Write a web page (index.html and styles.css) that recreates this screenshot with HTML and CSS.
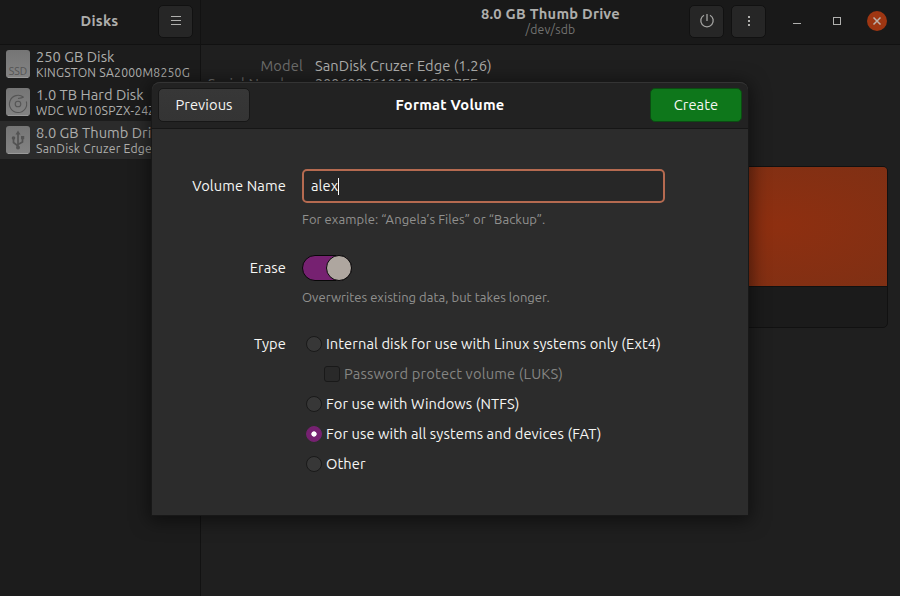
FILE: index.html
```html
<!DOCTYPE html>
<html lang="en">
<head>
<meta charset="utf-8">
<title>Disks</title>
<link rel="stylesheet" href="styles.css">
</head>
<body>
<div class="window">
  <aside class="sidebar">
    <header class="bar side-bar">
      <h1 class="side-title">Disks</h1>
      <button class="icon-btn menu-btn" aria-label="Menu"><svg width="16" height="16" viewBox="0 0 16 16"><path d="M3 3.5h10M3 7.5h10M3 11.5h10" stroke="#b0b0ae"/></svg></button>
    </header>
    <ul class="disks">
      <li class="disk">
        <svg class="disk-icon" width="24" height="28" viewBox="0 0 24 28"><defs><linearGradient id="metal" x2="0" y2="1"><stop stop-color="#757575"/><stop offset="1" stop-color="#838383"/></linearGradient></defs><rect class="plate" width="24" height="28" rx="3"/><path d="M2 27.500h20" stroke="#9a9a9a"/><text x="12" y="24.500" text-anchor="middle" class="ssd" textLength="18.500">SSD</text></svg>
        <div><div class="name">250 GB Disk</div><div class="model">KINGSTON SA2000M8250G</div></div>
      </li>
      <li class="disk">
        <svg class="disk-icon" width="24" height="28" viewBox="0 0 24 28"><rect class="plate" width="24" height="28" rx="3"/><path d="M2 27.500h20" stroke="#9a9a9a"/><g fill="none" stroke="#555" stroke-width="1.100"><path d="M17.500 9.300A8.600 8.600 0 1 0 20.300 13.500"/><circle cx="12" cy="16" r="2.800"/><path d="M12 10.500q4-.500 5.500-1.200"/></g></svg>
        <div><div class="name">1.0 TB Hard Disk</div><div class="model">WDC WD10SPZX-24Z10</div></div>
      </li>
      <li class="disk selected">
        <svg class="disk-icon" width="24" height="28" viewBox="0 0 24 28"><rect class="plate" width="24" height="28" rx="3"/><path d="M2 27.500h20" stroke="#9a9a9a"/><path d="M12 21V8M12 20l-4.500-3.500V12M12 18.500l4.500-2.500V12" fill="none" stroke="#535353" stroke-width="1.700"/><path d="M9.500 8.500 12 4.500l2.500 4z" fill="#535353"/><circle cx="12" cy="21.500" r="2" fill="#535353"/><circle cx="7.500" cy="12" r="1.800" fill="#535353"/><rect x="15" y="10" width="3.200" height="3.200" fill="#535353"/></svg>
        <div><div class="name">8.0 GB Thumb Drive</div><div class="model">SanDisk Cruzer Edge</div></div>
      </li>
    </ul>
  </aside>
  <main class="content">
    <header class="bar main-bar">
      <div class="heading"><div class="drive">8.0 GB Thumb Drive</div><div class="device">/dev/sdb</div></div>
      <button class="icon-btn" aria-label="Power"><svg width="16" height="16" viewBox="0 0 16 16" fill="none" stroke="#a4a4a2" stroke-width="1.300"><path d="M8 1v7M5 2.200a6.200 6.200 0 1 0 6 0"/></svg></button>
      <button class="icon-btn" aria-label="More"><svg width="16" height="16" viewBox="0 0 16 16" fill="#b0b0ae"><path d="M7 3h2v2H7zM7 7h2v2H7zM7 11h2v2H7z"/></svg></button>
      <div class="controls">
        <svg width="20" height="20" viewBox="0 0 20 20"><path d="M6 12.500h8" stroke="#b0b0ae"/></svg>
        <svg width="20" height="20" viewBox="0 0 20 20"><rect x="6.500" y="6.500" width="7" height="7" fill="none" stroke="#b0b0ae"/></svg>
        <svg width="20" height="20" viewBox="0 0 20 20"><circle cx="10" cy="10" r="10" fill="#9e3612"/><path d="m6.500 6.500 7 7m0-7-7 7" stroke="#bbb1ab" stroke-width="1.500"/></svg>
      </div>
    </header>
    <dl class="details">
      <dt>Model</dt><dd>SanDisk Cruzer Edge (1.26)</dd>
      <dt>Serial Number</dt><dd class="serial">200608761013A1C227EE</dd>
    </dl>
    <section class="volumes"><div class="partition"></div></section>
  </main>
</div>
<div class="dialog" role="dialog">
  <header class="dialog-bar">
    <button class="btn previous">Previous</button>
    <h2 class="dialog-title">Format Volume</h2>
    <button class="btn create">Create</button>
  </header>
  <form class="form">
    <label class="label vn">Volume Name</label>
    <div class="entry"><span>alex</span><i class="caret"></i></div>
    <p class="hint h1">For example: “Angela’s Files” or “Backup”.</p>
    <label class="label erase">Erase</label>
    <div class="switch"><i class="knob"></i></div>
    <p class="hint h2">Overwrites existing data, but takes longer.</p>
    <label class="label type">Type</label>
    <div class="options">
      <label class="option"><i class="radio"></i><span>Internal disk for use with Linux systems only (Ext4)</span></label>
      <label class="option sub"><i class="check"></i><span>Password protect volume (LUKS)</span></label>
      <label class="option"><i class="radio"></i><span>For use with Windows (NTFS)</span></label>
      <label class="option"><i class="radio on"></i><span>For use with all systems and devices (FAT)</span></label>
      <label class="option"><i class="radio"></i><span>Other</span></label>
    </div>
  </form>
</div>
</body>
</html>
```
FILE: styles.css
```css
* { box-sizing: border-box; }
body {
  margin: 0; width: 900px; height: 596px; overflow: hidden; background: #1f1f1f;
  font: 14.667px/20px Ubuntu, "Noto Sans", sans-serif; letter-spacing: .09px; color: #aeaeac;
}
h1, h2, p, ul, dl, dd { margin: 0; padding: 0; }
i { display: block; }
svg { display: block; flex: none; }
button { font: inherit; letter-spacing: inherit; color: inherit; padding: 0; }
.window { display: grid; grid-template-columns: 201px 1fr; height: 596px; }
.sidebar { background: #1c1c1c; border-right: 1px solid #121212; }
.bar { height: 45px; background: #191919; border-bottom: 1px solid #111; display: flex; align-items: center; padding-bottom: 2px; }
.side-title { flex: 1; text-align: center; padding-left: 41px; font-size: 14.667px; line-height: 20px; letter-spacing: .25px; }
.icon-btn {
  width: 35px; height: 33px; border: 1px solid #111; border-radius: 5px; background: #262626;
  display: flex; align-items: center; justify-content: center; flex: none;
}
.menu-btn { margin-right: 7px; }
.disks { list-style: none; }
.disk { display: flex; gap: 6px; height: 38px; padding: 5px 0 0 6px; white-space: nowrap; overflow: hidden; }
.disk.selected { background: #2b2b2b; }
.plate { fill: url(#metal); }
.ssd { font-size: 10.5px; fill: #535353; }
.name { line-height: 18px; margin-top: -2px; letter-spacing: .03px; }
.model { font-size: 12.2px; line-height: 14px; letter-spacing: .23px; }
.content { min-width: 0; }
.main-bar { padding-right: 13px; }
.main-bar .icon-btn + .icon-btn { margin-left: 7px; }
.heading { flex: 1; text-align: center; padding-left: 211px; }
.drive { font-weight: bold; line-height: 16px; letter-spacing: .25px; }
.device { font-size: 12.2px; line-height: 15px; letter-spacing: .25px; color: #737371; }
.controls { display: flex; gap: 20px; margin-left: 21px; }
.details { display: grid; grid-template-columns: 102px 1fr; column-gap: 12px; padding-top: 12px; line-height: 18px; white-space: nowrap; }
.details dt { color: #6d6d6b; justify-self: end; letter-spacing: .15px; }
.details dd { letter-spacing: .05px; }
.details .serial { letter-spacing: -.22px; }
.volumes { margin: 73px 12px 0; height: 162px; border: 1px solid #111; border-radius: 5px; overflow: hidden; background: #1b1b1b; }
.partition { height: 120px; border-bottom: 1px solid #111; background: radial-gradient(ellipse 360px 180px at 565px 58px, #8e2f10, #7c3015 55%, #702d16); }
.dialog {
  position: absolute; left: 152px; top: 82px; width: 596px; height: 433px; background: #2c2c2c; color: #f6f6f4;
  border-radius: 8px 8px 0 0; box-shadow: 0 0 0 1px #181818, 0 3px 18px 3px rgba(0,0,0,.5); white-space: nowrap;
}
.dialog-bar { height: 47px; background: #222; border-top: 1px solid #343434; border-bottom: 1px solid #161616; border-radius: 8px 8px 0 0; display: flex; justify-content: space-between; align-items: center; padding: 0 6px 2px; }
.btn { width: 92px; height: 34px; border: 1px solid #171717; border-radius: 5px; background: linear-gradient(#373737, #343434); }
.create { background: #0e771b; border-color: #0b4c12; }
.dialog-title { font-size: 14.667px; line-height: 20px; letter-spacing: .25px; color: #fff; }
.form { display: grid; grid-template-columns: 134px 363px; column-gap: 16px; padding-top: 40px; }
.label { justify-self: end; letter-spacing: .12px; }
.entry { height: 34px; border: 2px solid #b56a50; border-radius: 5px; background: #272727; display: flex; align-items: center; padding-left: 7px; }
.caret { width: 1px; height: 17px; background: #fff; }
.vn { line-height: 34px; }
.hint { grid-column: 2; font-size: 13px; line-height: 18px; letter-spacing: .03px; color: #91918f; }
.h1 { margin: 7px 0 27px; letter-spacing: .07px; }
.switch { width: 50px; height: 26px; border: 1px solid #080808; border-radius: 13px; background: #762171; display: flex; justify-content: flex-end; }
.knob { width: 26px; height: 26px; margin: -1px; border: 1px solid #080808; border-radius: 50%; background: #aea69f; }
.erase, .type { line-height: 26px; }
.h2 { margin: 7px 0 23px; }
.type { line-height: 30px; }
.option { display: flex; align-items: center; gap: 4px; height: 30px; padding-left: 4px; }
.option.sub { padding-left: 22px; color: #858583; letter-spacing: .17px; }
.radio, .check { width: 16px; height: 16px; border: 1px solid #191919; border-radius: 50%; background: #373737; flex: none; }
.check { border-radius: 3px; background: #292929; }
.radio.on { border-color: #762171; background: radial-gradient(circle, #fff 2.300px, #762171 3px); }
```
